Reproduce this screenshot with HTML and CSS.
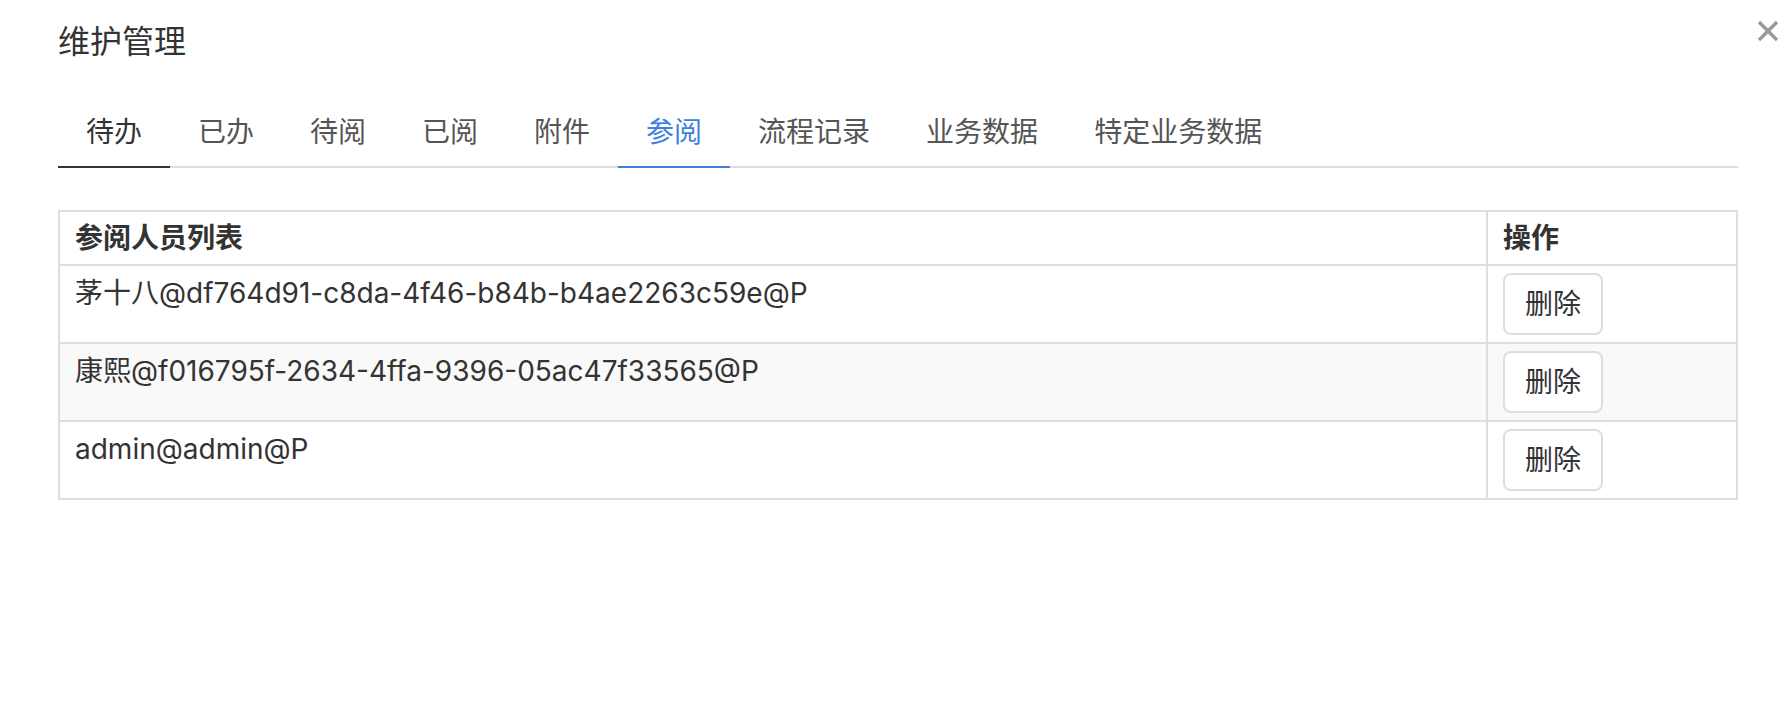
FILE: index.html
```html
<!DOCTYPE html>
<html lang="zh-CN">
<head>
    <meta charset="UTF-8">
    <meta name="viewport" content="width=device-width, initial-scale=1.0">
    <title>维护管理</title>
    <link rel="stylesheet" href="styles.css">
</head>
<body>
    <div class="modal">
        <button class="modal-close" aria-label="关闭">
            <svg width="24" height="24" viewBox="0 0 24 24">
                <path d="M3 3 L21 21 M21 3 L3 21" stroke="#999" stroke-width="3.4" fill="none"/>
            </svg>
        </button>
        <h2 class="modal-title">维护管理</h2>

        <ul class="tabs">
            <li class="tab tab-focus">待办</li>
            <li class="tab">已办</li>
            <li class="tab">待阅</li>
            <li class="tab">已阅</li>
            <li class="tab">附件</li>
            <li class="tab active">参阅</li>
            <li class="tab">流程记录</li>
            <li class="tab">业务数据</li>
            <li class="tab">特定业务数据</li>
        </ul>

        <table class="reader-table">
            <thead>
                <tr>
                    <th>参阅人员列表</th>
                    <th class="col-op">操作</th>
                </tr>
            </thead>
            <tbody>
                <tr>
                    <td>茅十八@df764d91-c8da-4f46-b84b-b4ae2263c59e@P</td>
                    <td><button class="btn">删除</button></td>
                </tr>
                <tr>
                    <td>康熙@f016795f-2634-4ffa-9396-05ac47f33565@P</td>
                    <td><button class="btn">删除</button></td>
                </tr>
                <tr>
                    <td>admin@admin@P</td>
                    <td><button class="btn">删除</button></td>
                </tr>
            </tbody>
        </table>
    </div>
</body>
</html>
```

FILE: styles.css
```css
body {
    margin: 0;
    font-family: Inter, "Noto Sans CJK SC", sans-serif;
    color: #333;
    background-color: #fff;
}

.modal {
    position: relative;
    padding: 20px 52px 0 58px;
}

.modal-title {
    margin: 0;
    font-size: 32px;
    line-height: 44px;
    font-weight: normal;
    color: #333;
}

.modal-close {
    position: absolute;
    top: 19px;
    right: 10px;
    width: 24px;
    height: 24px;
    padding: 0;
    border: 0;
    background: none;
}

.modal-close svg {
    display: block;
}

.tabs {
    list-style: none;
    margin: 36px 0 0;
    padding: 0;
    display: flex;
    border-bottom: 2px solid #ddd;
}

.tab {
    font-size: 28px;
    line-height: 40px;
    padding: 12px 28px 14px;
    color: #555;
    border-bottom: 2px solid transparent;
    margin-bottom: -2px;
}

.tab-focus {
    color: #333;
    border-bottom-color: #333;
}

.tab.active {
    color: #3d7fe2;
    border-bottom-color: #3d7fe2;
}

.reader-table {
    width: 100%;
    margin-top: 42px;
    border-collapse: collapse;
    font-size: 28px;
}

.reader-table th,
.reader-table td {
    border: 2px solid #ddd;
    padding: 7px 15px;
    line-height: 40px;
    text-align: left;
    vertical-align: top;
}

.reader-table th {
    padding: 6px 15px;
    font-weight: bold;
}

.reader-table .col-op {
    width: 218px;
}

.reader-table tbody tr:nth-child(even) {
    background-color: #f9f9f9;
}

.btn {
    display: block;
    height: 62px;
    box-sizing: border-box;
    padding: 0 20px;
    font-family: inherit;
    font-size: 28px;
    line-height: 58px;
    color: #333;
    background-color: #fff;
    border: 2px solid #ddd;
    border-radius: 8px;
}
```
